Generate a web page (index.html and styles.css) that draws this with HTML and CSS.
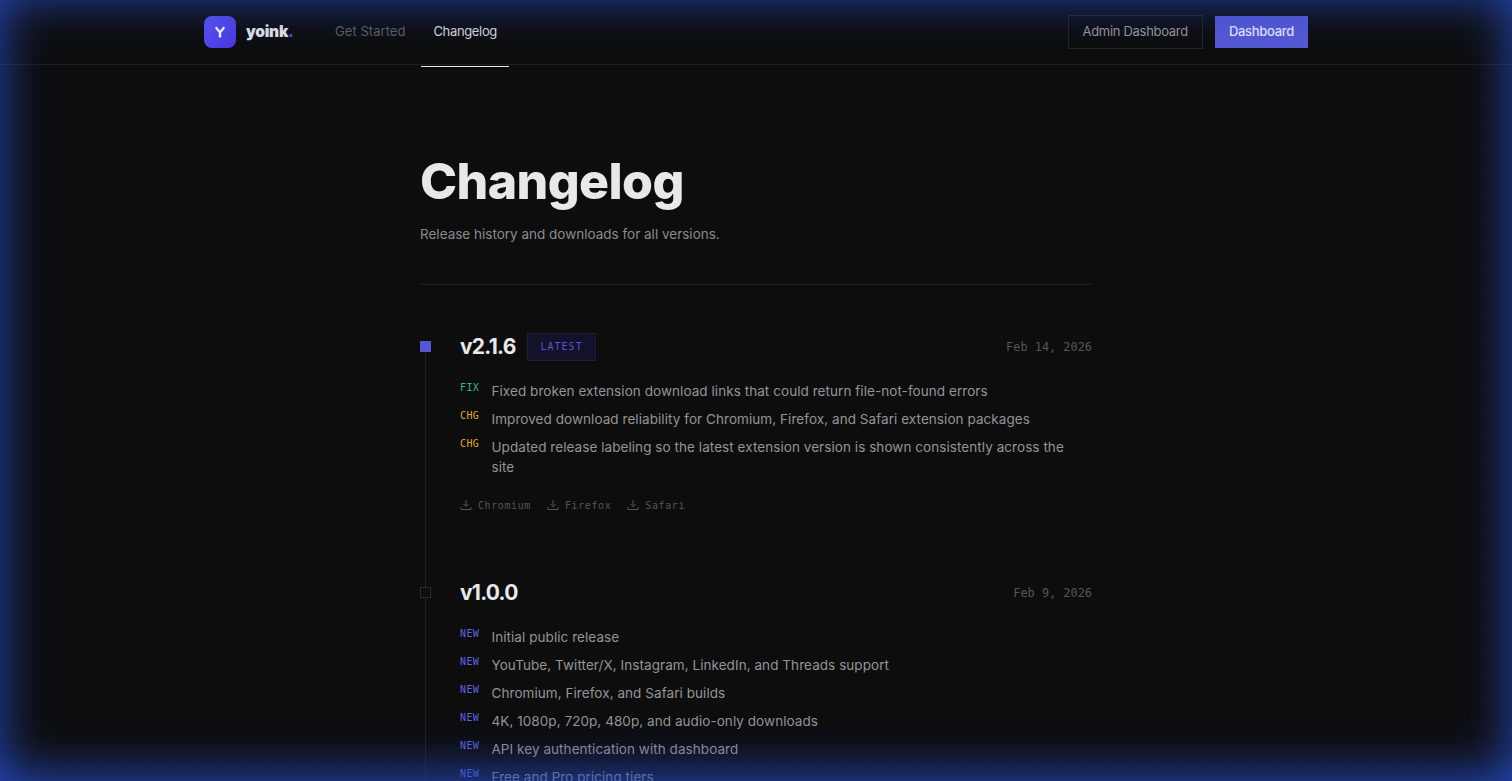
FILE: index.html
```html
<!DOCTYPE html>
<html lang="en">
<head>
<meta charset="utf-8">
<title>Changelog - yoink</title>
<link rel="stylesheet" href="styles.css">
</head>
<body>
<div class="glow"></div>
<header class="topbar">
  <div class="topbar-inner">
    <div class="left">
      <a class="brand" href="#">
        <span class="logo"><svg width="12" height="12" viewBox="0 0 14 14" fill="none" stroke="#f4f4ff" stroke-width="2.800"><path d="M2 1.500l5 6 5-6M7 7v6.500"/></svg></span>
        <span class="wordmark">yoink<span class="dot">.</span></span>
      </a>
      <nav class="nav">
        <a class="nav-link" href="#">Get Started</a>
        <a class="nav-link active" href="#">Changelog</a>
      </nav>
    </div>
    <div class="actions">
      <a class="btn btn-ghost" href="#">Admin Dashboard</a>
      <a class="btn btn-primary" href="#">Dashboard</a>
    </div>
  </div>
</header>
<main class="main">
  <h1 class="title">Changelog</h1>
  <p class="subtitle">Release history and downloads for all versions.</p>
  <div class="timeline">
    <section class="release">
      <div class="release-head">
        <span class="marker marker-on"></span>
        <h2 class="version">v2.1.6</h2>
        <span class="latest">LATEST</span>
        <span class="date">Feb 14, 2026</span>
      </div>
      <ul class="items">
        <li class="item"><span class="tag fix">FIX</span><span class="text">Fixed broken extension download links that could return file-not-found errors</span></li>
        <li class="item"><span class="tag chg">CHG</span><span class="text">Improved download reliability for Chromium, Firefox, and Safari extension packages</span></li>
        <li class="item"><span class="tag chg">CHG</span><span class="text">Updated release labeling so the latest extension version is shown consistently across the site</span></li>
      </ul>
      <div class="downloads">
        <a class="dl" href="#"><svg class="dl-icon" viewBox="0 0 12 12" fill="none" stroke="currentColor" stroke-width="1"><path d="M6 1v6.500M3.500 5L6 7.500 8.500 5M1 8v2.500h10V8"/></svg>Chromium</a>
        <a class="dl" href="#"><svg class="dl-icon" viewBox="0 0 12 12" fill="none" stroke="currentColor" stroke-width="1"><path d="M6 1v6.500M3.500 5L6 7.500 8.500 5M1 8v2.500h10V8"/></svg>Firefox</a>
        <a class="dl" href="#"><svg class="dl-icon" viewBox="0 0 12 12" fill="none" stroke="currentColor" stroke-width="1"><path d="M6 1v6.500M3.500 5L6 7.500 8.500 5M1 8v2.500h10V8"/></svg>Safari</a>
      </div>
    </section>
    <section class="release">
      <div class="release-head">
        <span class="marker"></span>
        <h2 class="version">v1.0.0</h2>
        <span class="date">Feb 9, 2026</span>
      </div>
      <ul class="items">
        <li class="item"><span class="tag new">NEW</span><span class="text">Initial public release</span></li>
        <li class="item"><span class="tag new">NEW</span><span class="text">YouTube, Twitter/X, Instagram, LinkedIn, and Threads support</span></li>
        <li class="item"><span class="tag new">NEW</span><span class="text">Chromium, Firefox, and Safari builds</span></li>
        <li class="item"><span class="tag new">NEW</span><span class="text">4K, 1080p, 720p, 480p, and audio-only downloads</span></li>
        <li class="item"><span class="tag new">NEW</span><span class="text">API key authentication with dashboard</span></li>
        <li class="item"><span class="tag new">NEW</span><span class="text">Free and Pro pricing tiers</span></li>
      </ul>
    </section>
  </div>
</main>
</body>
</html>
```
FILE: styles.css
```css
* { box-sizing: border-box; }
html, body { margin: 0; padding: 0; }
html { background: #0d0d0e; scrollbar-width: none; }
body {
  font-family: "Inter", "Liberation Sans", sans-serif;
  color: #e8e8e8;
  min-height: 100vh;
  background-image:
    linear-gradient(rgba(255,255,255,0.004) 1px, transparent 1px),
    linear-gradient(90deg, rgba(255,255,255,0.004) 1px, transparent 1px);
  background-size: 24px 24px;
}
a { text-decoration: none; color: inherit; }
.glow {
  position: fixed;
  inset: 0;
  pointer-events: none;
  z-index: 5;
  box-shadow: inset 0 -5px 50px 0 rgb(38, 74, 192);
}
.topbar { height: 65px; border-bottom: 1px solid #1f1f21; }
.topbar-inner {
  width: 1104px;
  height: 64px;
  margin: 0 auto;
  display: flex;
  align-items: center;
  justify-content: space-between;
}
.left { display: flex; align-items: center; height: 100%; }
.brand { display: flex; align-items: center; gap: 10px; width: 117px; }
.logo {
  width: 32px;
  height: 32px;
  border-radius: 8px;
  background: linear-gradient(135deg, #5a55f5, #4a35dc);
  display: flex;
  align-items: center;
  justify-content: center;
}
.wordmark { font-size: 15.500px; font-weight: 900; letter-spacing: -0.25px; color: #e4e4e6; padding-bottom: 1px; }
.dot { color: #5048ee; }
.nav { display: flex; height: 100%; }
.nav-link {
  position: relative;
  display: flex;
  align-items: center;
  padding: 0 14px 2px;
  font-size: 13px;
  letter-spacing: 0.05px;
  color: #5d5d62;
}
.nav-link.active { color: #d8d8dc; letter-spacing: -0.35px; }
.nav-link.active::after {
  content: "";
  position: absolute;
  left: 2px;
  right: 2px;
  bottom: -3px;
  height: 1px;
  background: #e8e8e8;
}
.actions { display: flex; align-items: center; gap: 12px; }
.btn {
  height: 32px;
  display: flex;
  align-items: center;
  font-size: 13px;
  letter-spacing: -0.3px;
  padding: 0 14px 2px;
}
.btn-ghost { border: 1px solid #232327; color: #96969c; height: 34px; }
.btn-primary { background: #5558d4; color: #e6e6f8; font-weight: 500; }
.main { width: 672px; margin: 0 auto; padding-top: 85px; }
.title {
  margin: 0;
  font-size: 50px;
  line-height: 62px;
  font-weight: 800;
  letter-spacing: -0.6px;
  color: #e8e8e8;
}
.subtitle {
  margin: 12px 0 0;
  font-size: 13.500px;
  line-height: 20px;
  color: #8a8a8e;
  padding-bottom: 40px;
  border-bottom: 1px solid #1f1f21;
}
.timeline { margin-top: 48px; position: relative; }
.timeline::before {
  content: "";
  position: absolute;
  left: 5px;
  top: 20px;
  bottom: 0;
  width: 1px;
  background: #1f1f21;
}
.release { position: relative; padding-left: 40px; padding-bottom: 66px; }
.release-head { display: flex; align-items: center; height: 28px; position: relative; }
.marker {
  position: absolute;
  left: -40px;
  top: 8px;
  width: 11px;
  height: 11px;
  background: #0d0d0e;
  border: 1px solid #2c2c2f;
}
.marker-on { background: #5558d4; border-color: #5558d4; }
.version { margin: 0; padding-bottom: 2px; font-size: 21px; font-weight: 700; letter-spacing: -0.75px; color: #e8e8e8; }
.latest {
  margin-left: 11.500px;
  height: 28px;
  display: flex;
  align-items: center;
  padding: 0 12.500px 1px;
  font-family: "DejaVu Sans Mono", monospace;
  font-size: 10px;
  letter-spacing: 1px;
  color: #5558d4;
  background: #12122a;
  border: 1px solid #1f1f3a;
}
.date {
  margin-left: auto;
  font-family: "DejaVu Sans Mono", monospace;
  font-size: 11.900px;
  color: #56565a;
}
.items { list-style: none; margin: 20px 0 0; padding: 0; display: flex; flex-direction: column; gap: 8px; }
.item { display: flex; line-height: 20px; }
.tag {
  flex: none;
  width: 31.500px;
  font-family: "DejaVu Sans Mono", monospace;
  font-size: 10px;
  line-height: 14px;
  letter-spacing: 0.4px;
}
.fix { color: #34b88a; }
.chg { color: #e0a83c; }
.new { color: #5f62e0; }
.text { font-size: 13.500px; letter-spacing: 0.06px; color: #949498; max-width: 580px; }
.downloads { display: flex; gap: 16px; margin-top: 20px; }
.dl {
  display: flex;
  align-items: center;
  gap: 6px;
  font-family: "DejaVu Sans Mono", monospace;
  font-size: 10px;
  letter-spacing: 0.6px;
  color: #55555a;
  height: 16px;
}
.dl-icon { width: 12px; height: 12px; }
```
